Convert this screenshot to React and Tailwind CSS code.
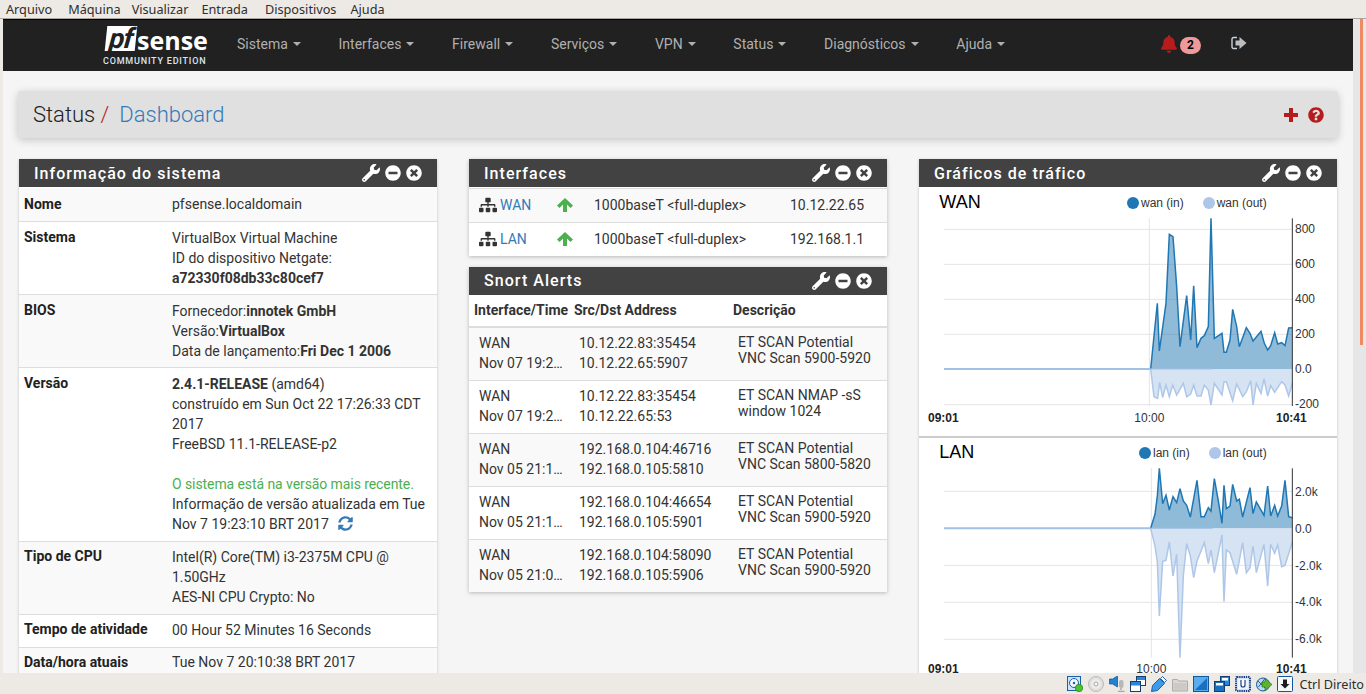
import { FaWrench, FaMinusCircle, FaTimesCircle, FaSitemap, FaBell, FaQuestionCircle, FaSyncAlt } from "react-icons/fa";

const menuBar = ["Arquivo", "Máquina", "Visualizar", "Entrada", "Dispositivos", "Ajuda"];
const menuGaps = ["mr-[16px]", "mr-[11px]", "mr-[13px]", "mr-[17px]", "mr-[14px]", ""];
const navItems = ["Sistema", "Interfaces", "Firewall", "Serviços", "VPN", "Status", "Diagnósticos", "Ajuda"];

const wanIn = [[692,537],[712,340],[718,483],[738,340],[748,133],[759,140],[770,290],[780,470],[800,317],[812,450],[821,287],[831,473],[843,445],[853,437],[865,410],[873,85],[883,445],[906,430],[912,487],[919,487],[930,450],[938,358],[950,410],[958,470],[979,413],[990,430],[999,453],[1023,424],[1033,460],[1043,480],[1052,467],[1064,428],[1073,462],[1085,458],[1095,467],[1106,414],[1117,413]];
const wanOut = [[692,537],[702,620],[713,625],[719,577],[728,622],[738,585],[748,620],[758,585],[770,615],[790,580],[800,620],[812,612],[821,585],[831,618],[843,618],[853,585],[865,600],[873,645],[883,580],[906,615],[912,575],[919,575],[938,632],[950,582],[968,620],[979,605],[992,572],[999,645],[1009,580],[1023,610],[1032,567],[1043,618],[1052,587],[1064,607],[1085,575],[1095,585],[1106,618],[1117,580]];
const lanIn = [[692,277],[705,235],[712,180],[718,97],[728,203],[738,178],[748,222],[759,182],[770,200],[780,158],[790,195],[800,208],[811,243],[831,133],[843,242],[853,242],[865,215],[873,225],[883,128],[895,195],[906,262],[912,148],[919,218],[930,210],[938,145],[950,195],[958,190],[968,243],[990,155],[999,233],[1009,198],[1032,238],[1043,150],[1052,240],[1064,208],[1073,240],[1085,210],[1095,133],[1106,242],[1117,245]];
const lanOut = [[692,277],[705,330],[712,378],[718,540],[728,376],[738,373],[748,318],[759,420],[770,355],[780,665],[790,420],[800,323],[811,360],[821,425],[831,375],[853,320],[865,383],[873,342],[883,410],[906,297],[912,497],[919,342],[930,350],[950,415],[968,320],[979,410],[990,395],[999,330],[1009,410],[1032,325],[1043,450],[1052,325],[1064,352],[1073,327],[1085,392],[1095,388],[1117,318]];

const alerts = [
  ["Nov 07 19:2…", "10.12.22.83:35454", "10.12.22.65:5907", "ET SCAN Potential", "VNC Scan 5900-5920"],
  ["Nov 07 19:2…", "10.12.22.83:35454", "10.12.22.65:53", "ET SCAN NMAP -sS", "window 1024"],
  ["Nov 05 21:1…", "192.168.0.104:46716", "192.168.0.105:5810", "ET SCAN Potential", "VNC Scan 5800-5820"],
  ["Nov 05 21:1…", "192.168.0.104:46654", "192.168.0.105:5901", "ET SCAN Potential", "VNC Scan 5900-5920"],
  ["Nov 05 21:0…", "192.168.0.104:58090", "192.168.0.105:5906", "ET SCAN Potential", "VNC Scan 5900-5920"],
];

function PanelHead({ title, raised }) {
  return (
    <div className="flex h-[28px] items-center justify-between bg-[#424242] pl-[15px] pr-[15px] text-white">
      <span className={`text-[16px] font-medium tracking-[1.05px] ${raised ? "" : "mt-[2px]"}`}>{title}</span>
      <span className="flex items-center gap-[5px]">
        <FaWrench className="h-[18px] w-[18px]" />
        <FaMinusCircle className="h-[16px] w-[16px]" />
        <FaTimesCircle className="h-[16px] w-[16px]" />
      </span>
    </div>
  );
}

function InfoRow({ label, pad = "pt-[6px] pb-[6px]", level, children }) {
  return (
    <div className={`flex border-t border-[#ddd] odd:bg-[#f9f9f9] first:border-t-0 first:pb-[7px] ${pad}`}>
      <div className={`w-[153px] shrink-0 pl-[5px] font-bold text-[#212121] ${level ? "" : "-mt-[1px]"}`}>{label}</div>
      <div className="min-w-0 flex-1 pr-[5px]">{children}</div>
    </div>
  );
}

function IfaceRow({ name, ip }) {
  return (
    <div className="flex h-[34px] items-center border-t border-[#ddd] pb-[2px] odd:bg-[#f9f9f9]">
      <FaSitemap className="ml-[10px] h-[18px] w-[18px] text-[#333]" />
      <a className="ml-[3px] w-[57px] text-[#337ab7]">{name}</a>
      <svg viewBox="0 0 16 14" className="h-[14px] w-[16px]">
        <path d="M8 0l8 7.5L13.5 10 10 6.5V14H6V6.5L2.5 10 0 7.5z" fill="#4caf50" />
      </svg>
      <span className="ml-[21px] w-[196px]">1000baseT &lt;full-duplex&gt;</span>
      <span>{ip}</span>
    </div>
  );
}

function AlertRow({ when, src, dst, d1, d2 }) {
  return (
    <div className="flex h-[53px] border-t border-[#ddd] pt-[5px] odd:bg-[#f9f9f9] first:h-[52px] first:border-t-0">
      <div className="w-[100px] shrink-0 pl-[10px]">
        <div>WAN</div>
        <div className="truncate">{when}</div>
      </div>
      <div className="w-[159px] shrink-0 pl-[10px]">
        <div>{src}</div>
        <div>{dst}</div>
      </div>
      <div className="mt-[1px] pl-[10px] leading-[16px]">
        <div>{d1}</div>
        <div>{d2}</div>
      </div>
    </div>
  );
}

function pts(list) {
  return list.map((p) => p.join(",")).join(" ");
}

// coordinates are 3x page pixels, read off the reference crops
function Chart({ name, vbY, h, top, bottom, grid, labels, vx, inData, outData, zero, legend, legendY, titleY, xY }) {
  return (
    <svg viewBox={`-3 ${vbY} 1254 ${h * 3}`} width="418" height={h} className="block" fontFamily="'Liberation Sans', Arial, sans-serif">
      <text x="58" y={titleY} fontSize="54" fill="#000">{name}</text>
      <circle cx={legend[0]} cy={legendY} r="18" fill="#1f77b4" />
      <text x={legend[0] + 24} y={legendY + 13} fontSize="36" fill="#333">{legend[1]}</text>
      <circle cx={legend[2]} cy={legendY} r="18" fill="#aec7e8" />
      <text x={legend[2] + 23} y={legendY + 13} fontSize="36" fill="#333">{legend[3]}</text>
      {grid.map((y) => (
        <line key={y} x1="72" x2="1117" y1={y} y2={y} stroke="#e5e5e5" strokeWidth="3" />
      ))}
      <line x1={vx} x2={vx} y1={top} y2={bottom} stroke="#e5e5e5" strokeWidth="3" />
      <polygon points={`${pts(inData)} 1117,${zero}`} fill="#1f77b4" fillOpacity="0.5" />
      <polygon points={`${pts(outData)} 1117,${zero}`} fill="#aec7e8" fillOpacity="0.5" />
      <polyline points={pts(outData)} fill="none" stroke="#aec7e8" strokeWidth="4.5" />
      <polyline points={pts(inData)} fill="none" stroke="#1f77b4" strokeWidth="4.5" />
      <line x1="72" x2="692" y1={zero} y2={zero} stroke="#a3c1e3" strokeWidth="6" />
      <line x1="692" x2="878" y1={zero} y2={zero} stroke="#a3c1e3" strokeWidth="3" />
      <line x1="1117" x2="1117" y1={top} y2={bottom} stroke="#333" strokeWidth="3" />
      {labels.map(([t, y]) => (
        <text key={t} x="1125" y={y} fontSize="36" fill="#333">{t}</text>
      ))}
      <text x="24" y={xY} fontSize="36" fontWeight="700" fill="#222">09:01</text>
      <text x={vx} y={xY} fontSize="36" textAnchor="middle" fill="#333">10:00</text>
      <text x="1068" y={xY} fontSize="36" fontWeight="700" fill="#222">10:41</text>
    </svg>
  );
}

function TrayIcon({ children }) {
  return (
    <svg viewBox="0 0 16 16" className="h-[16px] w-[16px] shrink-0">
      {children}
    </svg>
  );
}

function StatusTray() {
  return (
    <div className="flex items-center gap-[5px]">
      <TrayIcon>
        <rect x="0.5" y="0.5" width="13" height="14" fill="#cfe4f7" stroke="#1a5fa8" />
        <circle cx="7" cy="7" r="4.5" fill="#f4f9fe" stroke="#1a5fa8" />
        <circle cx="7" cy="7" r="1.2" fill="#1a5fa8" />
        <circle cx="12" cy="12" r="3.7" fill="#48c52f" stroke="#27801a" strokeWidth="0.7" />
      </TrayIcon>
      <TrayIcon>
        <circle cx="8" cy="8" r="7.5" fill="#e0dfdc" stroke="#bbbab6" />
        <circle cx="8" cy="8" r="5" fill="#ececea" />
        <circle cx="8" cy="8" r="2" fill="#f8f8f6" stroke="#aaa9a5" />
      </TrayIcon>
      <TrayIcon>
        <path d="M0.5 3h3l5-3v11l-5-3h-3z" fill="#2382d2" stroke="#11508c" strokeWidth="0.7" />
        <rect x="10" y="4" width="4.5" height="8" rx="2" fill="#b7b7b4" />
        <path d="M12 12v2M9 15.5h6.5" stroke="#a5a5a2" strokeWidth="1.4" fill="none" />
      </TrayIcon>
      <TrayIcon>
        <rect x="6.5" y="0.5" width="9" height="9" fill="#fff" stroke="#173f6e" />
        <rect x="7" y="1" width="8" height="3" fill="#2a86d8" />
        <rect x="0.5" y="5.5" width="10" height="10" fill="#fff" stroke="#173f6e" />
        <rect x="1" y="6" width="9" height="3.5" fill="#2a86d8" />
      </TrayIcon>
      <TrayIcon>
        <path d="M0.5 15.5l1-6 7-7 5 5-7 7z" fill="#3f9ae8" stroke="#14569a" strokeWidth="0.9" />
        <path d="M9.5 2.5l2-2 4 4-2 2z" fill="#f2f6fb" stroke="#14569a" strokeWidth="0.9" />
      </TrayIcon>
      <TrayIcon>
        <path d="M0.5 3.5h5l1 1.5h9v10h-15z" fill="#d9d8d5" stroke="#adacA8" />
        <rect x="1.5" y="7" width="13" height="7" fill="#cbcac7" />
      </TrayIcon>
      <TrayIcon>
        <rect x="0.5" y="0.5" width="15" height="15" fill="#56aeee" stroke="#14569a" />
        <path d="M2 14L14 2v12z" fill="#1a6fc0" />
      </TrayIcon>
      <TrayIcon>
        <rect x="6.5" y="0.5" width="9" height="9" fill="#2a86d8" stroke="#123f70" />
        <rect x="8" y="2" width="6" height="2.5" fill="#fff" />
        <rect x="0.5" y="5.5" width="10" height="10" fill="#1a6fc0" stroke="#123f70" />
        <rect x="2" y="7" width="7" height="2.5" fill="#fff" />
      </TrayIcon>
      <TrayIcon>
        <rect x="1" y="1" width="14" height="14" rx="1" fill="#d6e4f6" stroke="#1f3f86" strokeWidth="2" strokeDasharray="1.4 0.8" />
        <rect x="3" y="3" width="10" height="10" fill="#eef4fc" />
        <path d="M6 4v5a2 2 0 0 0 4 0V4" fill="#fff" stroke="#1f3f86" strokeWidth="1.2" />
      </TrayIcon>
      <TrayIcon>
        <circle cx="7" cy="8.5" r="6.5" fill="#bcd9f3" stroke="#14569a" />
        <path d="M2 5l8 8M9 2.5L2.5 11" stroke="#14569a" strokeWidth="0.9" fill="none" />
        <path d="M9 2.5l7 6-7 6v-3.5H6V6h3z" fill="#5cb531" stroke="#2c7a18" strokeWidth="0.7" />
      </TrayIcon>
      <TrayIcon>
        <rect x="0.5" y="0.5" width="15" height="15" rx="1" fill="#f6f8fb" stroke="#14569a" />
        <path d="M6 3.5h4v4.5h2.5L8 12.5 3.5 8H6z" fill="#1c1c1c" />
      </TrayIcon>
    </div>
  );
}

export default function App() {
  return (
    <div className="flex h-screen flex-col overflow-hidden bg-[#edeae5] font-['Roboto',sans-serif] text-[14px] leading-[20px] text-[#333]">
      <div className="flex h-[19px] shrink-0 items-center border-b border-[#a9a6a1] pl-[6px] font-['Noto_Sans',sans-serif] text-[12.7px] text-[#2e2e2e]">
        {menuBar.map((m, i) => (
          <span key={m} className={menuGaps[i]}>{m}</span>
        ))}
      </div>

      <div className="flex min-h-0 flex-1 pl-[3px]">
        <div className="flex min-w-0 flex-1 flex-col bg-[#f5f5f5]">
          <nav className="flex h-[52px] shrink-0 items-center border-t border-black bg-[#212121] pb-[4px]">
            <div className="mt-[6px] ml-[103px] flex w-[115px] shrink-0 flex-col self-start">
              <div className="flex h-[27px] items-start">
                <span className="flex h-[25px] w-[30px] -skew-x-6 items-center justify-center bg-white text-[28px] font-bold italic leading-none tracking-[-1px] text-[#212121]">pf</span>
                <span className="mt-[2px] ml-[1px] font-['Open_Sans',sans-serif] text-[25px] font-bold leading-none text-white">sense</span>
              </div>
              <span className="mt-[3px] -ml-[3px] text-[9px] leading-[11px] font-medium tracking-[0.8px] whitespace-nowrap text-[#d8e6f2]">COMMUNITY EDITION</span>
            </div>
            <div className="ml-[16px] flex flex-1 items-center gap-[37.7px] text-[#b0b0b0]">
              {navItems.map((n) => (
                <span key={n} className="flex items-center gap-[5px]">
                  {n}
                  <span className="h-0 w-0 border-x-[4px] border-t-[4px] border-x-transparent border-t-[#b0b0b0]" />
                </span>
              ))}
            </div>
            <div className="flex items-center">
              <FaBell className="h-[18px] w-[18px] text-[#b71c1c]" />
              <span className="mt-[3px] ml-[2px] flex h-[17px] w-[21px] items-center justify-center rounded-full bg-[#ef9a9a] text-[12px] font-bold text-black">2</span>
              <svg viewBox="0 0 16 14" className="mr-[106px] mb-[2px] ml-[30px] h-[14px] w-[16px]">
                <path d="M6 1.5H2.5A1.5 1.5 0 0 0 1 3v8a1.5 1.5 0 0 0 1.5 1.5H6" fill="none" stroke="#c8d3dc" strokeWidth="1.4" />
                <path d="M4.5 4.5h4V1l7 6-7 6V9.5h-4z" fill="#bdbdbd" />
              </svg>
            </div>
          </nav>

          <main className="min-h-0 flex-1 overflow-hidden px-[16px] pt-[20px]">
            <div className="-mx-[1px] flex h-[47px] items-center justify-between rounded-[3px] bg-[#e0e0e0] pr-[14px] pl-[15px] shadow-[0_2px_8px_rgba(0,0,0,0.2)]">
              <h1 className="text-[22px] leading-none font-light text-[#212121]">
                Status <span className="text-[#b71c1c]">/</span>
                <span className="ml-[10px] text-[#337ab7]">Dashboard</span>
              </h1>
              <span className="flex items-center gap-[10px] text-[#b71c1c]">
                <svg viewBox="0 0 14 14" className="h-[14px] w-[14px]">
                  <path d="M5 0h4v5h5v4H9v5H5V9H0V5h5z" fill="#b71c1c" />
                </svg>
                <FaQuestionCircle className="h-[16px] w-[16px]" />
              </span>
            </div>

            <div className="mt-[21px] grid grid-cols-[418px_418px_418px] gap-x-[32px]">
              <section className="bg-white shadow-[0_1px_3px_rgba(0,0,0,0.2)]">
                <PanelHead title="Informação do sistema" />
                <div className="pt-[1px]">
                  <InfoRow label="Nome" level>pfsense.localdomain</InfoRow>
                  <InfoRow label="Sistema">
                    <div>VirtualBox Virtual Machine</div>
                    <div>ID do dispositivo Netgate:</div>
                    <div className="font-bold">a72330f08db33c80cef7</div>
                  </InfoRow>
                  <InfoRow label="BIOS">
                    <div>Fornecedor:<span className="font-bold">innotek GmbH</span></div>
                    <div>Versão:<span className="font-bold">VirtualBox</span></div>
                    <div>Data de lançamento:<span className="font-bold">Fri Dec 1 2006</span></div>
                  </InfoRow>
                  <InfoRow label="Versão">
                    <div><span className="font-bold">2.4.1-RELEASE</span> (amd64)</div>
                    <div>construído em Sun Oct 22 17:26:33 CDT 2017</div>
                    <div>FreeBSD 11.1-RELEASE-p2</div>
                    <div className="mt-[20px] tracking-[-0.08px] text-[#4caf50]">O sistema está na versão mais recente.</div>
                    <div className="pb-[1px]">
                      Informação de versão atualizada em Tue Nov 7 19:23:10 BRT 2017
                      <FaSyncAlt className="ml-[9px] inline h-[15px] w-[15px] align-[-2px] text-[#337ab7]" />
                    </div>
                  </InfoRow>
                  <InfoRow label="Tipo de CPU" pad="pt-[5px] pb-[7px]">
                    <div>Intel(R) Core(TM) i3-2375M CPU @ 1.50GHz</div>
                    <div>AES-NI CPU Crypto: No</div>
                  </InfoRow>
                  <InfoRow label="Tempo de atividade" pad="pt-[5px] pb-[7px]">00 Hour 52 Minutes 16 Seconds</InfoRow>
                  <InfoRow label="Data/hora atuais" pad="pt-[4px] pb-[7px]" level>Tue Nov 7 20:10:38 BRT 2017</InfoRow>
                </div>
              </section>

              <div className="flex flex-col gap-[11px]">
                <section className="bg-white shadow-[0_1px_4px_rgba(0,0,0,0.25)]">
                  <PanelHead title="Interfaces" />
                  <div className="pt-[1px]">
                    <IfaceRow name="WAN" ip="10.12.22.65" />
                    <IfaceRow name="LAN" ip="192.168.1.1" />
                  </div>
                </section>
                <section className="bg-white shadow-[0_1px_4px_rgba(0,0,0,0.25)]">
                  <PanelHead title="Snort Alerts" raised />
                  <div className="flex h-[33px] items-center border-b-2 border-[#ddd] pb-[1px] pl-[5px] font-bold">
                    <span className="w-[100px]">Interface/Time</span>
                    <span className="w-[159px]">Src/Dst Address</span>
                    <span>Descrição</span>
                  </div>
                  <div>
                    {alerts.map((a, i) => (
                      <AlertRow key={i} when={a[0]} src={a[1]} dst={a[2]} d1={a[3]} d2={a[4]} />
                    ))}
                  </div>
                </section>
              </div>

              <section className="bg-white shadow-[0_1px_3px_rgba(0,0,0,0.2)]">
                <PanelHead title="Gráficos de tráfico" />
                <div className="pt-[3px]">
                  <Chart
                    name="WAN" vbY={0} h={246} top={85} bottom={648} grid={[118, 223, 328, 433, 644]} vx={688}
                    labels={[["800", 129], ["600", 233], ["400", 338], ["200", 443], ["0.0", 548], ["-200", 653]]}
                    inData={wanIn} outData={wanOut} zero={537} legend={[639, "wan (in)", 867, "wan (out)"]}
                    legendY={39} titleY={55} xY={695}
                  />
                  <div className="h-[2px] bg-[#ccc]" />
                  <Chart
                    name="LAN" vbY={6} h={256} top={97} bottom={665} grid={[166, 388, 499, 610]} vx={694}
                    labels={[["2.0k", 179], ["0.0", 290], ["-2.0k", 401], ["-4.0k", 510], ["-6.0k", 621]]}
                    inData={lanIn} outData={lanOut} zero={277} legend={[675, "lan (in)", 885, "lan (out)"]}
                    legendY={51} titleY={67} xY={712}
                  />
                </div>
              </section>
            </div>
          </main>
        </div>

        <div className="flex w-[13px] shrink-0 bg-[#e6e6e6] pl-[7px]">
          <div className="h-[326px] w-[3px] bg-[#ef8a62]" />
        </div>
      </div>

      <footer className="flex h-[21px] shrink-0 items-center justify-end bg-[#edeae5] pr-[2px] font-['Noto_Sans',sans-serif] text-[12.7px] text-[#2e2e2e]">
        <StatusTray />
        <span className="ml-[6px]">Ctrl Direito</span>
      </footer>
    </div>
  );
}
